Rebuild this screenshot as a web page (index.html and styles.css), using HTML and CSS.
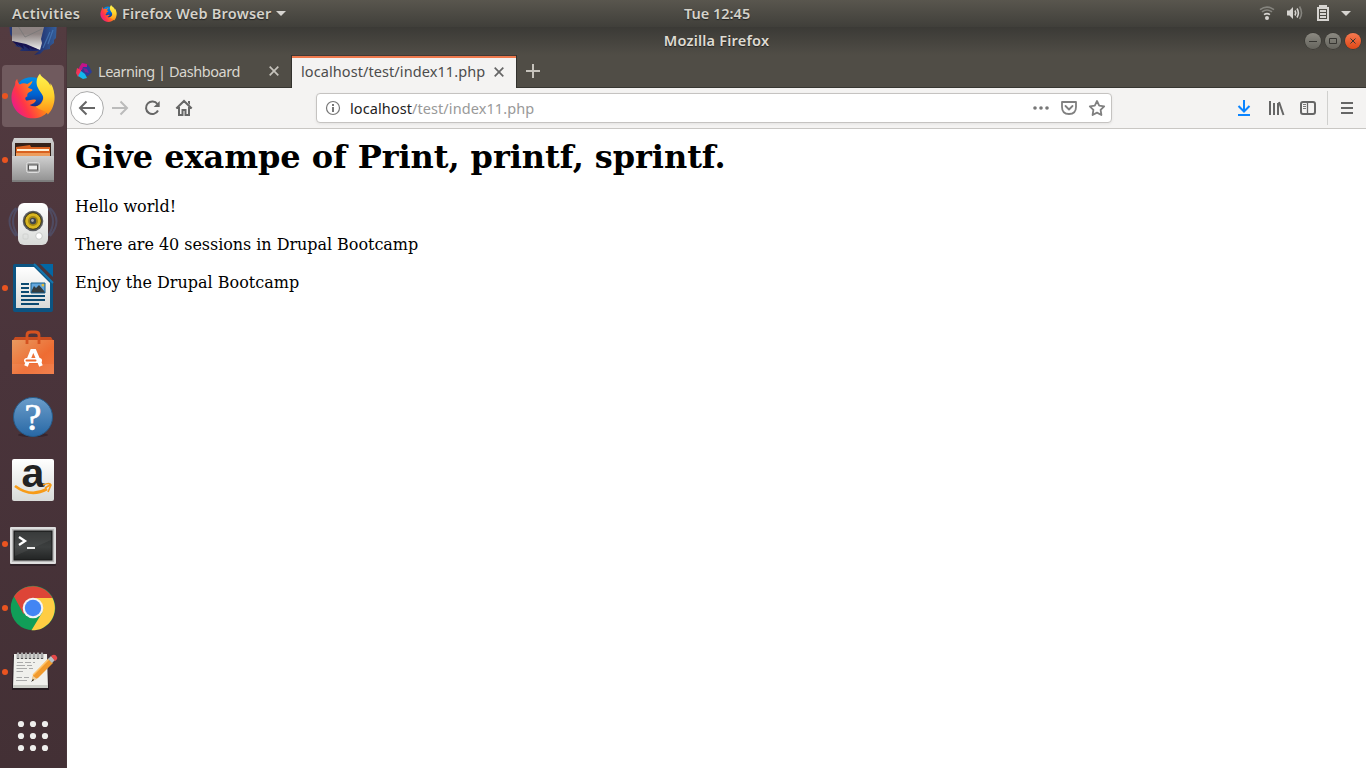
FILE: index.html
```html
<!DOCTYPE html>
<html lang="en">
<head>
<meta charset="utf-8">
<title>Mozilla Firefox</title>
<link rel="stylesheet" href="styles.css">
</head>
<body>
<svg width="0" height="0" class="defs">
  <defs>
    <linearGradient id="fx" x1="0" y1=".8" x2="1" y2=".3"><stop offset="0" stop-color="#e5149b"/><stop offset=".3" stop-color="#ff3647"/><stop offset=".65" stop-color="#ff8a16"/><stop offset="1" stop-color="#ffdf2e"/></linearGradient>
    <linearGradient id="fy" x1="0" y1="0" x2="0" y2="1"><stop offset="0" stop-color="#fff44f"/><stop offset=".55" stop-color="#ffd02b"/><stop offset="1" stop-color="#ff8a16"/></linearGradient>
    <linearGradient id="fb" x1="0" y1="0" x2="0" y2="1"><stop offset="0" stop-color="#008fe8"/><stop offset=".5" stop-color="#0060cf"/><stop offset="1" stop-color="#20105f"/></linearGradient>
    <linearGradient id="tb" x1="0" y1="0" x2="1" y2="0"><stop offset="0" stop-color="#293c76"/><stop offset=".5" stop-color="#1c2463"/><stop offset="1" stop-color="#34609c"/></linearGradient>
    <linearGradient id="mail" x1="0" y1=".3" x2="0" y2="1"><stop offset="0" stop-color="#8e8483"/><stop offset="1" stop-color="#eee"/></linearGradient>
    <linearGradient id="grey" x1="0" y1="0" x2="0" y2="1"><stop offset="0" stop-color="#d0d0d0"/><stop offset="1" stop-color="#929292"/></linearGradient>
    <linearGradient id="white" x1="0" y1="0" x2="0" y2="1"><stop offset="0" stop-color="#fff"/><stop offset="1" stop-color="#d8dad8"/></linearGradient>
    <linearGradient id="bag" x1="0" y1="0" x2="1" y2="1"><stop offset="0" stop-color="#e89a60"/><stop offset=".6" stop-color="#ee6c32"/><stop offset="1" stop-color="#f17843"/></linearGradient>
    <linearGradient id="help" x1="0" y1="0" x2="0" y2="1"><stop offset="0" stop-color="#6b9dca"/><stop offset="1" stop-color="#2868a5"/></linearGradient>
    <linearGradient id="term" x1="0" y1="0" x2="0" y2="1"><stop offset="0" stop-color="#2b2d2d"/><stop offset=".55" stop-color="#3c3f3f"/><stop offset="1" stop-color="#222424"/></linearGradient>
    <symbol id="firefox" viewBox="32 139 135 139">
      <circle cx="95" cy="205" r="54" fill="url(#fb)"/>
      <path fill="url(#fx)" d="M51 156C52 163 55 169 59 173C66 168 75 168 82 172L98 162C97 172 88 178 84 182C88 188 101 186 97 192C94 196 84 197 82 204V210C76 210 73 218 79 222C88 224 98 216 109 221C106 231 94 235 89 236C110 249 136 230 131 199L161 190C172 236 142 277 99 277C60 277 29 243 34 205C36 188 46 176 45 168C45 163 48 159 51 156Z"/>
      <path fill="url(#fy)" d="M121 140C110 151 107 169 115 184C121 198 136 207 130 223C126 234 116 240 108 241C116 252 140 252 145 265C161 250 168 225 165 204C163 188 160 178 153 169V178C148 158 126 155 121 140Z"/>
    </symbol>
  </defs>
</svg>
<div class="desktop">
  <header class="topbar">
    <span class="activities">Activities</span>
    <svg class="mini-fox" width="17" height="17"><use href="#firefox"/></svg>
    <span class="appname">Firefox Web Browser</span>
    <svg class="caret" width="10" height="6"><path d="M0 0H10L5 5Z"/></svg>
    <span class="clock">Tue 12:45</span>
    <svg class="tray" width="110" height="27" viewBox="1256 0 110 27">
      <circle cx="1267" cy="18" r="2"/><path d="M1264 14.6Q1267 12.6 1270 14.6" class="ring bright"/><path d="M1262 11.9Q1267 8 1272 11.9M1260 9.6Q1267 4.6 1274 9.6" class="ring"/>
      <path d="M1287 10.5H1289.5L1293 7V19L1289.5 15.5H1287Z"/><path d="M1295 10.5Q1296.5 13 1295 15.5M1297 8.5Q1299.8 13 1297 17.5" class="ring bright"/><path d="M1299.5 6.5Q1303.5 13 1299.5 19" class="ring"/>
      <path fill-rule="evenodd" d="M1319 5H1327V7H1329V21H1317V7H1319ZM1319 9V19H1327V9Z"/><path d="M1320 10H1326V12H1320ZM1320 13H1326V15H1320ZM1320 16H1326V18H1320Z"/>
      <path d="M1341 11H1351L1346 16Z"/>
    </svg>
  </header>
  <div class="workspace">
    <nav class="dock">
      <div class="slot"><svg viewBox="0 0 67 64"><path d="M9 20H57L56 38L54 40V43L50 46V49L44 50L40 54L34 55L39 51H30L20 51L22 48L15 46L17 44L12 40L13 38L10 34Z" fill="url(#tb)"/><path fill="url(#mail)" d="M12 27H44L41 39L42 43L40 50L12 41Z"/><path d="M18 26L25 37L42 29" fill="none" stroke="#777" stroke-width=".8"/><path d="M12 41L26 44L40 50L32 49L29 47L30 50L23 45L24 49L17 44L19 47Z" fill="#171250"/><path d="M53 30L48 44M50 32L43 48" stroke="#4f87c6" stroke-width="1.2" opacity=".6"/></svg></div>
      <div class="slot active"><svg viewBox="0 0 67 64"><use href="#firefox" x="11" y="9" width="44" height="46"/></svg></div>
      <div class="slot running"><svg viewBox="0 0 67 64">
        <path d="M14 10H52L54 15V54H12V15Z" fill="url(#grey)"/><path d="M15 15H51V30H15Z" fill="#35211a"/><path d="M16 19L30 17L31 19H50V28H16Z" fill="#d86120"/><path d="M17 21H49V23H17Z" fill="#fff0d5"/><path d="M16 25H50V28H16Z" fill="#ed9d5d"/><path d="M12 28H54V53H12Z" fill="url(#grey)"/><path d="M12 53H54" stroke="#666"/><rect x="26.5" y="34.5" width="13" height="10" rx="2" fill="#aaa" stroke="#ddd"/><rect x="28.5" y="37" width="9" height="5" fill="#eee" stroke="#555"/></svg></div>
      <div class="slot"><svg viewBox="0 0 67 64">
        <g fill="none" stroke="#526a98" stroke-width="2" opacity=".4"><path d="M16 16Q3 29 16 44M18 16Q8 29 18 44M50 16Q63 29 50 44M48 16Q58 29 48 44"/></g>
        <rect x="18" y="11" width="30" height="42" rx="6" fill="url(#white)"/><circle cx="33" cy="29" r="10.3" fill="#5b5d61"/><circle cx="33" cy="29" r="8.3" fill="#d8b520" stroke="#3c3510"/><circle cx="33" cy="29" r="5" fill="#a38614"/><circle cx="33" cy="29" r="3.2" fill="#41464b"/><circle cx="32.5" cy="28.5" r="1.4" fill="#aaa"/><circle cx="39" cy="44" r="3.3" fill="#fff" stroke="#c9cbc9"/><rect x="23" y="42" width="5" height="5" rx="1" fill="none" stroke="#d0d2d0"/></svg></div>
      <div class="slot running"><svg viewBox="0 0 67 64">
        <rect x="13" y="8" width="40" height="48" rx="2" fill="#0c5482"/><path d="M36 8H53V26Z" fill="#4b353a"/><path d="M40 8H53V21Z" fill="#0367a4"/><path d="M16 11H34L50 27V52H16Z" fill="url(#white)"/><path d="M34 8L53 27" stroke="#1675ac" stroke-width="2"/>
        <path d="M21 28H29M21 32H29M21 36H29M21 40H45M21 44H45M21 48H39" stroke="#0b4a71" stroke-width="2"/><path d="M31 27H45V37H31Z" fill="#62a6dd"/><path d="M31 36L34 30L36 32L39 29L45 36V37H31Z" fill="#343c3e"/><circle cx="43" cy="29" r="1.5" fill="#e4bc39"/><path d="M31 27H45V37H31Z" fill="none" stroke="#17608e"/></svg></div>
      <div class="slot"><svg viewBox="0 0 67 64">
        <path d="M13 20H53V23H13Z" fill="#9e4a25"/><path d="M12 22L15 17H51L54 22Z" fill="#c64c20"/><path d="M12 20H54V54H12Z" fill="url(#bag)"/><path d="M12 44H54V54H12Z" fill="#fff" opacity=".06"/><path d="M27 24V15Q27 12 31 12H35Q39 12 39 15V24" fill="none" stroke="#d55220" stroke-width="2.8"/>
        <path d="M26 46L32 31H34.5L41 46" fill="none" stroke="#fff" stroke-width="3.8"/><rect x="24" y="38" width="18" height="5" rx="2.5" fill="#fff"/><rect x="25.5" y="39.5" width="11" height="2" rx="1" fill="#ed6b30"/></svg></div>
      <div class="slot"><svg viewBox="0 0 67 64"><ellipse cx="33" cy="51" rx="15" ry="2" fill="#38252c"/><circle cx="33" cy="33" r="19.5" fill="url(#help)" stroke="#255b8a"/><text x="33" y="46" text-anchor="middle" class="question">?</text></svg></div>
      <div class="slot"><svg viewBox="0 0 67 64"><rect x="12" y="11" width="42" height="42" rx="2" fill="url(#white)"/><text x="33" y="38.5" text-anchor="middle" class="amazon">a</text><path d="M15 38Q31 50 47 41" fill="none" stroke="#f79b18" stroke-width="2.7"/><path d="M43 37Q50 34 51 37L48 44M45 40L50 37" fill="none" stroke="#f79b18" stroke-width="1.6"/></svg></div>
      <div class="slot running"><svg viewBox="0 0 67 64"><rect x="10" y="15" width="46" height="39" rx="1" fill="#312329"/><rect x="10" y="15" width="46" height="37" rx="1" fill="#dedede"/><rect x="12" y="17" width="42" height="33" fill="#b8b8b8"/><rect x="14" y="19" width="38" height="29" fill="url(#term)" stroke="#181818"/><path d="M51 20V28L15 44V20Z" fill="#fff" opacity=".06"/><path d="M19 25L25 29L19 33" fill="none" stroke="#fff" stroke-width="2.3"/><path d="M27 36H35" stroke="#eee" stroke-width="2"/></svg></div>
      <div class="slot running"><svg viewBox="0 0 67 64"><circle cx="33" cy="32" r="22.3" fill="#119e58"/><path d="M14 20.5A22.3 22.3 0 0 1 52.5 22H33L23.5 38Z" fill="#dd4537"/><path d="M33 22H52.5A22.3 22.3 0 0 1 31.5 54.3L42.5 36Z" fill="#ffcd43"/><circle cx="33" cy="32" r="10.3" fill="#f2f3f4"/><circle cx="33" cy="32" r="8.2" fill="#4285f4"/></svg></div>
      <div class="slot running"><svg viewBox="0 0 67 64">
        <path d="M12 50L13 15H47L49 50Z" fill="#251b20"/><path d="M14 14H47L48 48H13Z" fill="#f0f0ec"/><path d="M13 45H48V48H13Z" fill="#c9cbc5"/><path d="M17 22.5H23M25 22.5H31M33 22.5H35M16.5 25.5H25M27 25.5H32M16.5 28.5H27M29 28.5H33M16.5 31.5H23M16.5 37.5H22M24 37.5H29M16 40.5H27" stroke="#aaa" stroke-width="1"/>
        <path d="M18 13V19M22 13V19M26 13V19M30 13V19M34 13V19M38 13V19M42 13V19" stroke="#555" stroke-width="2.4"/><path d="M18 12.5V18M22 12.5V18M26 12.5V18M30 12.5V18M34 12.5V18M38 12.5V18M42 12.5V18" stroke="#e5e5e5" stroke-width="1.2"/>
        <path d="M32 41L33 35L48 19L53 23L38 38Z" fill="#f19a2d"/><path d="M33 35L49 19" stroke="#ffc46b" stroke-width="1.5"/><path d="M32 41L33 36L37 39Z" fill="#ead1a3"/><path d="M31 42L33 39L34 40Z" fill="#111"/><path d="M48 19L51 16L55 20L52 23Z" fill="#b6c1c5"/><path d="M51 16Q55 13 57 17Q58 19 55 21Z" fill="#e34949"/></svg></div>
      <div class="slot"><svg viewBox="0 0 67 64"><g fill="#eeeeec"><circle cx="21" cy="20" r="3.1"/><circle cx="33" cy="20" r="3.1"/><circle cx="45" cy="20" r="3.1"/><circle cx="21" cy="32" r="3.1"/><circle cx="33" cy="32" r="3.1"/><circle cx="45" cy="32" r="3.1"/><circle cx="21" cy="44" r="3.1"/><circle cx="33" cy="44" r="3.1"/><circle cx="45" cy="44" r="3.1"/></g></svg></div>
    </nav>
    <main class="window">
      <div class="titlebar"><span class="wtitle">Mozilla Firefox</span>
        <div class="buttons">
          <span class="wb"><svg width="16" height="16"><path d="M4 8.5H12"/></svg></span>
          <span class="wb"><svg width="16" height="16"><path d="M4.5 5.5H11.5V10.5H4.5Z"/></svg></span>
          <span class="wb close"><svg width="16" height="16"><path d="M5.5 5.5L10.5 10.5M10.5 5.5L5.5 10.5"/></svg></span>
        </div>
      </div>
      <div class="tabs">
        <div class="tab">
          <svg width="16" height="16"><path d="M7 0L12 2L14 5L16 9L12 13L6 12L2 10L4 5Z" fill="#2b3b98"/><path d="M6 0L11 1V4H7L6 7H2L4 3Z" fill="#c41488"/><path d="M1 5L5 7V10L2 14L0 10Z" fill="#f33457"/><path d="M5 8L9 11L11 15L7 16L2 13Z" fill="#12b8ed"/><path d="M7 5L11 6L13 10L9 9Z" fill="#7d2290"/></svg>
          <span class="tabtext one">Learning | Dashboard</span>
          <svg class="x" width="10" height="10"><path d="M.7 .7L9.3 9.3M9.3 .7L.7 9.3"/></svg>
        </div>
        <div class="tab current"><span class="tabtext two">localhost/test/index11.php</span><svg class="x" width="10" height="10"><path d="M.7 .7L9.3 9.3M9.3 .7L.7 9.3"/></svg></div>
        <svg class="plus" width="14" height="14"><path d="M7 0V14M0 7H14"/></svg>
      </div>
      <div class="toolbar">
        <svg class="navicons" width="134" height="40" viewBox="67 88 134 40">
          <circle cx="87" cy="108" r="16.4" fill="#fff" stroke="#aaa"/>
          <path d="M95 108H80M86.5 101.5L80 108L86.5 114.5" class="line"/>
          <path d="M112 108H127M120.5 101.5L127 108L120.5 114.5" class="line pale"/>
          <path d="M157.4 104A6.3 6.3 0 1 0 158 110.5" class="line"/><path d="M159.7 101V107H153.7Z" fill="#666"/>
          <path d="M176.3 108.5L184 101L191.7 108.5M179 107V115H182.5V110H185.5V115H189V107" class="line"/><path d="M188 101H190V105L188 103Z" fill="#666"/>
        </svg>
        <div class="urlbar">
          <svg width="16" height="16"><circle cx="8" cy="8" r="6.5" fill="none" stroke="#777" stroke-width="1.2"/><path d="M7 7H9V12H7ZM7 4H9V6H7Z" fill="#777"/></svg>
          <span class="url"><b>localhost</b>/test/index11.php</span>
          <svg class="urlicons" width="76" height="24" viewBox="1031 96 76 24"><g fill="#777"><circle cx="1035" cy="108" r="1.8"/><circle cx="1041" cy="108" r="1.8"/><circle cx="1047" cy="108" r="1.8"/></g><g fill="none" stroke="#808080" stroke-width="1.8" stroke-linejoin="round" stroke-linecap="round"><path d="M1062 102H1076V107Q1076 114 1069 114Q1062 114 1062 107Z"/><path d="M1065.5 106L1069 109.5L1072.5 106"/><path d="M1097 101L1099.2 105.6L1104.2 106.3L1100.6 109.9L1101.4 115L1097 112.6L1092.6 115L1093.4 109.9L1089.8 106.3L1094.8 105.6Z"/></g></svg>
        </div>
        <svg class="actions" width="139" height="40" viewBox="1227 88 139 40">
          <path d="M1244 100V111M1238.5 106L1244 111.5L1249.5 106M1238 115H1250" fill="none" stroke="#0a84ff" stroke-width="2"/>
          <path d="M1270 101V115M1274 103V115M1278 103V115" class="line"/><path d="M1279 102L1283.5 115" class="line"/>
          <rect x="1301" y="102" width="14" height="12" rx="2" class="line"/><path d="M1307.5 102V114" class="line thin"/><path d="M1303 104.5H1306M1303 106.5H1306M1303 108.5H1306" stroke="#777"/>
          <path d="M1327.5 91V125" stroke="#d0d0ce"/><path d="M1341 103H1353M1341 108H1353M1341 113H1353" class="line"/>
        </svg>
      </div>
      <article class="page"><h1>Give exampe of Print, printf, sprintf.</h1><p>Hello world!</p><p class="sessions">There are 40 sessions in Drupal Bootcamp</p><p>Enjoy the Drupal Bootcamp</p></article>
    </main>
  </div>
</div>
</body>
</html>
```
FILE: styles.css
```css
* { box-sizing: border-box; }
body { margin: 0; overflow: hidden; font: 14.5px "Noto Sans", "Open Sans", sans-serif; }
.defs { position: absolute; }
svg { display: block; flex: none; }
.desktop { width: 1366px; height: 768px; display: flex; flex-direction: column; }
.topbar { height: 27px; flex: none; display: flex; align-items: center; position: relative; padding-left: 12px; color: #d5d2ca; background: linear-gradient(#59564e, #403f3a); font-weight: 600; white-space: nowrap; text-shadow: 0 1px 1px #222; }
.topbar span { padding-bottom: 2px; }
.activities { width: 88px; letter-spacing: .36px; }
.mini-fox { margin-right: 5px; }
.appname { width: 149px; margin-right: 5px; letter-spacing: .22px; }
.caret, .tray { fill: #d6d4d0; }
.clock { position: absolute; left: 684px; }
.tray { margin-left: auto; }
.ring { fill: none; stroke: #85847e; stroke-width: 1.6; }
.ring.bright { stroke: #d6d4d0; }
.workspace { flex: 1; min-height: 0; display: flex; }
.dock { width: 67px; flex: none; overflow: hidden; background: linear-gradient(#533b40, #4a343b 45%, #433035); border-right: 1px solid #49363a; }
.slot { height: 64px; position: relative; }
.slot:first-child { margin-top: -27px; }
.slot svg { width: 67px; height: 64px; position: relative; }
.slot.active::before { content: ""; position: absolute; left: 2px; top: 1px; width: 62px; height: 62px; border-radius: 4px; background: #705a5e; }
.running::after, .active::after { content: ""; position: absolute; left: 2px; top: 29px; width: 6px; height: 6px; border-radius: 50%; background: #ea5420; }
.question { font: 38px "Liberation Serif", serif; fill: #fff; stroke: #fff; stroke-width: .7px; }
.amazon { font: bold 41px "Liberation Sans", sans-serif; fill: #222; }
.window { width: 1299px; display: flex; flex-direction: column; background: #fff; }
.titlebar { height: 28px; flex: none; display: flex; align-items: center; justify-content: center; position: relative; color: #dfdbd2; font-weight: 600; background: linear-gradient(#3b3a36, #504d46); text-shadow: 0 1px 1px #222; }
.wtitle { padding-bottom: 2px; letter-spacing: .2px; }
.buttons { position: absolute; right: 5px; top: 6px; display: flex; gap: 4px; }
.wb { width: 16px; height: 16px; border-radius: 50%; background: linear-gradient(#8c8a82, #65645d); box-shadow: 0 0 0 .5px #33322e; }
.wb path { fill: none; stroke: #373632; stroke-width: 1; }
.wb.close { background: linear-gradient(#f57950, #df4817); }
.tabs { height: 33px; flex: none; display: flex; align-items: center; background: #504d46; border-bottom: 1px solid #373631; color: #dad7cf; white-space: nowrap; }
.tab { display: flex; align-items: center; width: 224px; padding-left: 9px; height: 33px; }
.tab .tabtext { margin-left: 6px; }
.tab .one { width: 142px; letter-spacing: -.46px; }
.tab .two { width: 184px; letter-spacing: .08px; padding-bottom: 1px; }
.x { margin-left: auto; margin-right: 12px; fill: none; stroke: #c6c3bc; stroke-width: 1.7; }
.tab.current { width: 226px; margin-bottom: -1px; padding-left: 9px; color: #4c4c4c; background: #f4f3f2; border-left: 1px solid #32312d; border-right: 1px solid #32312d; box-shadow: inset 0 1px #423934, inset 0 3px #ee794d; }
.tab.current .tabtext { margin-left: 0; }
.current .x { stroke: #666; margin-right: 12px; }
.plus { margin-left: 9px; stroke: #c6c3bc; stroke-width: 2; }
.toolbar { height: 41px; flex: none; display: flex; background: #f4f3f2; border-bottom: 1px solid #c9c7c4; }
.line { fill: none; stroke: #666; stroke-width: 2; }
.pale { stroke: #bbb; }
.thin { stroke-width: 1.3; }
.urlbar { width: 796px; height: 30px; margin: 5px 0 0 115px; padding: 0 4px 0 8px; display: flex; align-items: center; background: #fff; border: 1px solid #c5c3c1; border-radius: 4px; box-shadow: 0 1px 3px #0001; }
.url { margin-left: 9px; color: #999; white-space: nowrap; letter-spacing: .08px; }
.url b { font-weight: 400; color: #222; }
.urlicons { margin-left: auto; }
.actions { margin-left: auto; }
.page { padding: 0 8px; font: 16px/19px "DejaVu Serif", serif; color: #000; }
.page h1 { font-size: 32px; line-height: 38px; margin: 9px 0 21px; letter-spacing: -.07px; }
.page p { margin: 0 0 19px; }
.page .sessions { letter-spacing: -.045px; }
```
